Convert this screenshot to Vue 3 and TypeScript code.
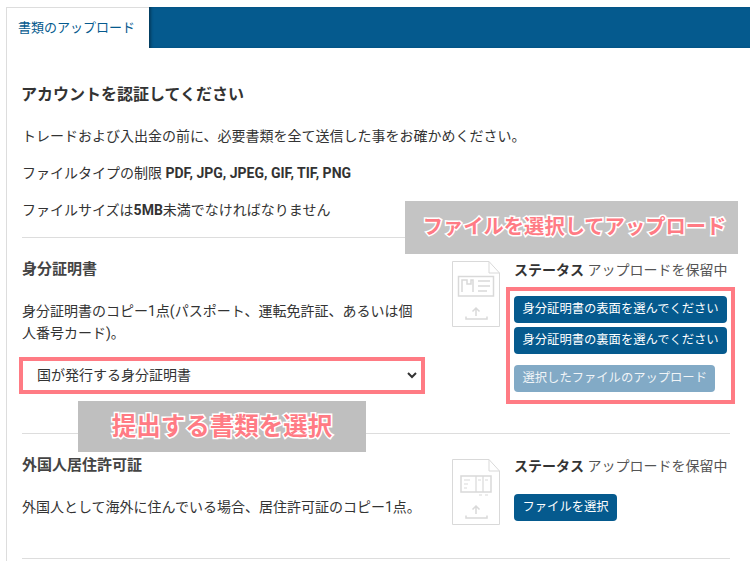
<script setup lang="ts">
interface Doc { title: string; lines: string }
const idDoc: Doc = { title: '身分証明書', lines: '身分証明書のコピー1点(パスポート、運転免許証、あるいは個人番号カード)。' }
const residence: Doc = { title: '外国人居住許可証', lines: '外国人として海外に住んでいる場合、居住許可証のコピー1点。' }
</script>

<template>
  <div class="page">
    <div class="panel">
      <div class="tabs">
        <div class="tab">書類のアップロード</div>
        <div class="tabfill"></div>
      </div>
      <div class="body">
        <h2 class="heading">アカウントを認証してください</h2>
        <p class="para">トレードおよび入出金の前に、必要書類を全て送信した事をお確かめください。</p>
        <p class="para">ファイルタイプの制限 <b>PDF, JPG, JPEG, GIF, TIF, PNG</b></p>
        <p class="para">ファイルサイズは<b>5MB</b>未満でなければなりません</p>
        <hr class="rule first" />

        <section class="docrow one">
          <div class="docmain">
            <h3 class="doctitle">{{ idDoc.title }}</h3>
            <p class="doctext">{{ idDoc.lines }}</p>
            <select class="docselect">
              <option>国が発行する身分証明書</option>
            </select>
          </div>
          <svg class="fileicon" width="48" height="66" viewBox="0 0 48 66" fill="none" stroke="#d9d9d9">
            <path d="M.5.5H37L47.5 12V65.500H.5Z" />
            <path d="M37 .5V12H47.500" />
            <rect x="6.500" y="15.500" width="35" height="19.500" stroke-width="1.500" />
            <path d="M10 31V19H15V23H19V19H21V31M26 20H38M26 25H38M26 30H35" stroke-width="1.500" />
            <path d="M24 55V47M20.500 50.500L24 47L27.500 50.500M14 55.500V58H35V55.500" stroke-width="1.500" />
          </svg>
          <div class="docside">
            <div class="status"><b>ステータス</b> アップロードを保留中</div>
            <div class="btnstack">
              <button class="btn">身分証明書の表面を選んでください</button>
              <button class="btn">身分証明書の裏面を選んでください</button>
              <button class="btn faded">選択したファイルのアップロード</button>
            </div>
          </div>
        </section>
        <hr class="rule" />

        <section class="docrow two">
          <div class="docmain">
            <h3 class="doctitle">{{ residence.title }}</h3>
            <p class="doctext">{{ residence.lines }}</p>
          </div>
          <svg class="fileicon" width="48" height="66" viewBox="0 0 48 66" fill="none" stroke="#d9d9d9">
            <path d="M.5.5H37L47.5 12V65.500H.5Z" />
            <path d="M37 .5V12H47.500" />
            <rect x="9" y="17" width="30" height="16" stroke-width="1.500" />
            <path d="M24 17V33M31 17V33M12 21H18M12 25H16M12 29H15M26 21H29M33 21H36M27 36H30M33 36H36" stroke-width="1.200" />
            <path d="M24 55V47M20.500 50.500L24 47L27.500 50.500M14 56.500V59H35V56.500" stroke-width="1.500" />
          </svg>
          <div class="docside">
            <div class="status"><b>ステータス</b> アップロードを保留中</div>
            <button class="btn solo">ファイルを選択</button>
          </div>
        </section>
        <hr class="rule" />
      </div>
    </div>

    <div class="mark mark-select"></div>
    <div class="mark mark-buttons"></div>
    <div class="note note-upload">ファイルを選択してアップロード</div>
    <div class="note note-select">提出する書類を選択</div>
  </div>
</template>

<style>
html, body { margin: 0; background: #fff; }
</style>

<style scoped>
.page {
  position: relative;
  width: 750px;
  height: 561px;
  overflow: hidden;
  padding: 7px 0 0 6px;
  box-sizing: border-box;
  background: #fff;
  font-family: Roboto, "Noto Sans CJK JP", sans-serif;
  font-size: 14px;
  color: #333;
}
.panel { border-left: 1px solid #ddd; min-height: 600px; }
.tabs { display: flex; height: 41px; }
.tab {
  width: 142px;
  box-sizing: border-box;
  border-top: 1px solid #ddd;
  padding-top: 11px;
  padding-left: 11px;
  font-size: 13px;
  line-height: 18px;
  color: #055a8e;
  background: #fff;
}
.tabfill {
  flex: 1;
  background: #055a8e;
  box-shadow: inset 3px 0 3px -1px rgba(0, 0, 0, .35);
}
.body { padding: 37px 20px 0 15px; }
.heading { margin: 0 0 20px -1px; font-size: 16px; line-height: 20px; font-weight: 700; color: #333; }
.para { margin: 0 0 15px; height: 22px; line-height: 22px; font-size: 14px; }
.para b { font-weight: 700; }
.rule { margin: 0; border: 0; border-top: 1px solid #ddd; }
.rule.first { margin-top: 16px; }
.docrow { display: flex; align-items: flex-start; box-sizing: border-box; }
.docrow.one { height: 195px; padding-top: 22px; }
.docrow.two { height: 124px; padding-top: 22px; }
.docmain { width: 430px; flex: none; }
.doctitle { margin: 0 0 22px; font-size: 15px; line-height: 18px; font-weight: 700; color: #444; }
.doctext { margin: 0; width: 404px; font-size: 14px; line-height: 22px; }
.docselect {
  display: block;
  width: 398px;
  height: 28px;
  margin-top: 17px;
  padding: 0 0 0 11px;
  border: 0;
  background: #fff;
  font: inherit;
  color: #333;
}
.fileicon { flex: none; margin-right: 14px; }
.one .fileicon { margin-top: 1px; }
.two .fileicon { margin-top: 3px; }
.docside { flex: none; }
.status { font-size: 14px; line-height: 20px; color: #555; white-space: nowrap; }
.status b { color: #333; font-weight: 700; }
.btnstack { display: flex; flex-direction: column; align-items: flex-start; margin-top: 16px; }
.btn {
  display: block;
  height: 27px;
  padding: 0 8px 0 8.500px;
  border: 0;
  border-radius: 4px;
  background: #055a8e;
  color: #fff;
  font: inherit;
  font-size: 12.300px;
  line-height: 27px;
  white-space: nowrap;
}
.btnstack .btn + .btn { margin-top: 4px; }
.btnstack .btn.faded { margin-top: 11px; background: #82aac6; color: #f0f4f7; }
.btn.solo { margin-top: 18px; }
.mark { position: absolute; box-sizing: border-box; border: 4px solid #ff7b84; pointer-events: none; }
.mark-select { left: 19px; top: 357px; width: 406px; height: 37px; }
.mark-buttons { left: 506px; top: 287px; width: 229px; height: 117px; }
.note {
  position: absolute;
  display: flex;
  align-items: center;
  justify-content: center;
  box-sizing: border-box;
  padding-bottom: 5px;
  background: #c4c4c4;
  color: #ff7b84;
  font-family: "Noto Sans CJK JP", sans-serif;
  font-weight: 700;
  white-space: nowrap;
  -webkit-text-stroke: 3px #fff;
  paint-order: stroke fill;
}
.note-upload { left: 405px; top: 201px; width: 333px; height: 53px; padding-left: 6px; font-size: 20.300px; }
.note-select { left: 78px; top: 401px; width: 288px; height: 51px; font-size: 24.500px; background: #bfbfbf; }
</style>
